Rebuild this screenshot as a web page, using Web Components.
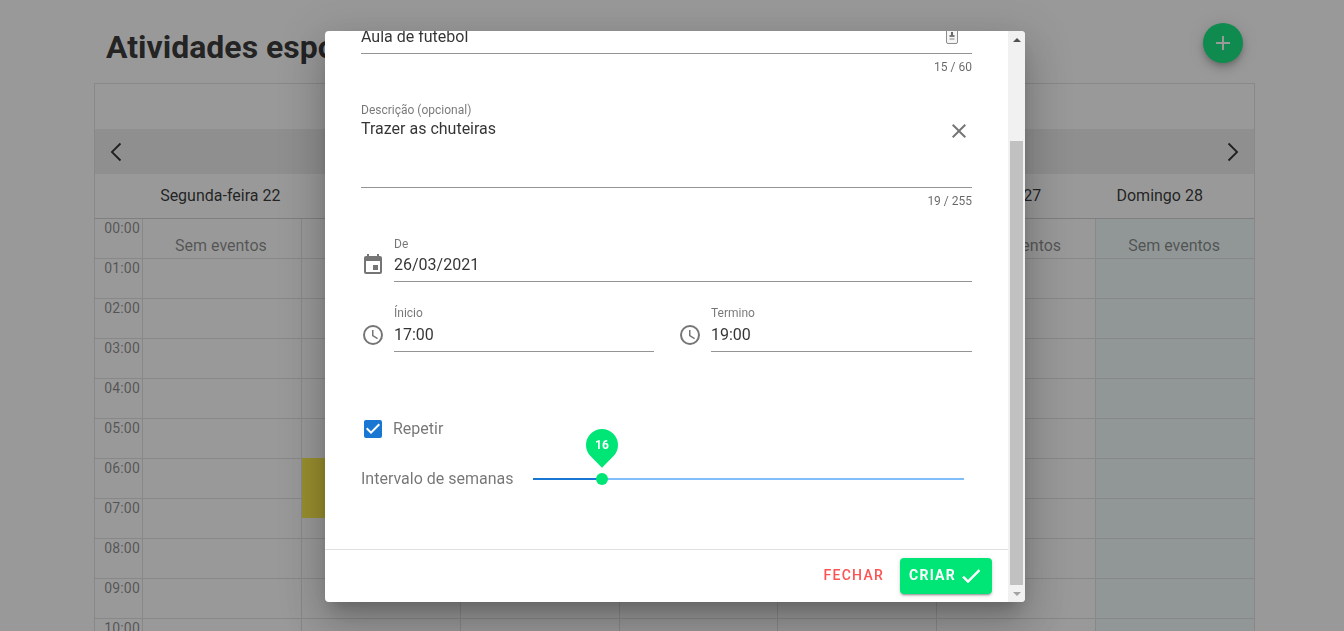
<!DOCTYPE html>
<html lang="pt">
<head>
<meta charset="utf-8">
<title>Atividades esportivas</title>
<style>
  html, body { margin: 0; height: 100%; overflow: hidden; background: #fff; font-family: Roboto, sans-serif; }
</style>
</head>
<body>
<activity-page></activity-page>
<event-dialog></event-dialog>

<script>
const ICONS = {
	clock: "M12 20a8 8 0 1 1 0-16 8 8 0 0 1 0 16m0-18A10 10 0 1 0 12 22 10 10 0 0 0 12 2m.5 5H11v6l5.2 3.2.8-1.3-4.5-2.7z",
	calendar: "M19 19H5V8h14m-3-7v2H8V1H6v2H5c-1.11 0-2 .89-2 2v14a2 2 0 0 0 2 2h14a2 2 0 0 0 2-2V5a2 2 0 0 0-2-2h-1V1m-1 11h-5v5h5z",
	close: "M19 6.41 17.59 5 12 10.59 6.41 5 5 6.41 10.59 12 5 17.59 6.41 19 12 13.41 17.59 19 19 17.59 13.41 12z",
	check: "M21 7 9 19l-5.5-5.5 1.41-1.41L9 16.17 19.59 5.59z",
	checkbox: "M10 17l-5-5 1.41-1.42L10 14.17l7.59-7.59L19 8m0-5H5c-1.11 0-2 .89-2 2v14a2 2 0 0 0 2 2h14a2 2 0 0 0 2-2V5a2 2 0 0 0-2-2z",
	left: "M15.41 3.41 14 2 4 12l10 10 1.41-1.41L6.83 12z",
	right: "M8.59 3.41 10 2l10 10-10 10-1.41-1.41L17.17 12z",
	plus: "M19 13h-6v6h-2v-6H5v-2h6V5h2v6h6z",
};

function icon(name, size, color, stroke) {
	const outline = stroke ? ` stroke="${color}" stroke-width="${stroke}"` : "";
	return `<svg width="${size}" height="${size}" viewBox="0 0 24 24" fill="${color}"${outline} style="display:block;flex:none"><path d="${ICONS[name]}"/></svg>`;
}

// little id-card glyph at the end of the title field
const BADGE = `<svg width="12" height="16" viewBox="0 0 12 16" style="display:block;margin:3px 14px 0 0">
	<rect x=".5" y=".5" width="11" height="15" rx="1.5" fill="#f5f5f5" stroke="#8c8c8c"/>
	<rect x="5" y="4" width="2" height="3" fill="#666"/>
	<rect x="3.5" y="7" width="5" height="2" fill="#777"/>
	<rect x="3.5" y="10" width="5" height="2" fill="#bdbdbd"/>
</svg>`;

class ActivityPage extends HTMLElement {
	constructor() {
		super();
		this.shadowDOM = this.attachShadow({ mode: "open" });
	}

	connectedCallback() {
		const days = ["Segunda-feira 22", "Terça-feira 23", "Quarta-feira 24", "Quinta-feira 25", "Sexta-feira 26", "Sábado 27", "Domingo 28"];
		const hours = [];
		for (let h = 0; h < 11; h++) hours.push(String(h).padStart(2, "0") + ":00");

		const columns = days.map((d, i) => `
			<div class="col ${i == 6 ? "sunday" : ""}">
				<div class="empty">Sem eventos</div>
				${i == 1 ? `<div class="event"></div>` : ""}
				${hours.map(() => `<div class="cell"></div>`).join("")}
			</div>`).join("");

		this.shadowDOM.innerHTML = `
		<style>
			:host { display: block; padding: 0 89px 0 94px; box-sizing: border-box; height: 631px; overflow: hidden; color: rgba(0,0,0,.87); }
			header { display: flex; justify-content: space-between; align-items: center; height: 83px; padding: 0 12px; box-sizing: border-box; }
			h1 { margin: 10px 0 0; font-size: 32px; font-weight: 700; line-height: 40px; }
			.fab { width: 40px; height: 40px; margin: 3px 0 0; border-radius: 50%; background: #00e676; display: flex; align-items: center; justify-content: center;
				box-shadow: 0 3px 5px -1px rgba(0,0,0,.2), 0 6px 10px 0 rgba(0,0,0,.14), 0 1px 18px 0 rgba(0,0,0,.12); }
			.calendar { border: 1px solid #e0e0e0; border-bottom: 0; }
			.top { height: 45px; }
			.nav { height: 45px; background: #ececec; display: flex; justify-content: space-between; align-items: center; padding: 0 12px; }
			.days { display: grid; grid-template-columns: repeat(7, 1fr); height: 44px; margin-left: 47px; padding: 0 16px 2px 0; box-sizing: border-box; align-items: center; text-align: center; font-size: 16px; }
			.grid { display: grid; grid-template-columns: 47px repeat(7, 1fr); border-top: 1px solid #d0d0d0; }
			.time { height: 40px; box-sizing: border-box; border-bottom: 1px solid #e0e0e0; font-size: 14px; letter-spacing: .2px; color: rgba(0,0,0,.5); text-align: right; padding: 1px 2px 0 0; line-height: 16px; }
			.col { position: relative; border-left: 1px solid #e0e0e0; }
			.cell { height: 40px; box-sizing: border-box; border-bottom: 1px solid #e0e0e0; }
			.sunday { background: rgba(0,190,160,.06); }
			.empty { position: absolute; top: 18px; left: 0; right: 2px; text-align: center; font-size: 16px; line-height: 18px; color: rgba(0,0,0,.5); }
			.event { position: absolute; top: 239px; left: 0; right: 0; height: 60px; background: #ffeb3b; }
		</style>
		<header>
			<h1>Atividades esportivas</h1>
			<div class="fab">${icon("plus", 24, "#fff")}</div>
		</header>
		<div class="calendar">
			<div class="top"></div>
			<div class="nav">${icon("left", 22, "rgba(0,0,0,.87)")}${icon("right", 22, "rgba(0,0,0,.87)")}</div>
			<div class="days">${days.map((d) => `<div>${d}</div>`).join("")}</div>
			<div class="grid">
				<div>${hours.map((h) => `<div class="time">${h}</div>`).join("")}</div>
				${columns}
			</div>
		</div>`;
	}
}

class TextField extends HTMLElement {
	constructor() {
		super();
		this.shadowDOM = this.attachShadow({ mode: "open" });
	}

	connectedCallback() {
		const label = this.getAttribute("label");
		const value = this.getAttribute("value");
		const ic = this.getAttribute("icon");
		const counter = this.getAttribute("counter");
		const height = this.getAttribute("height") || "28";
		const gap = Number(this.getAttribute("gap") || 0);
		this.shadowDOM.innerHTML = `
		<style>
			:host { display: block; flex: 1; min-width: 0; color: rgba(0,0,0,.8); }
			.wrap { display: flex; }
			.icon { width: 24px; margin-right: 9px; padding-top: ${14 + gap}px; flex: none; }
			.main { flex: 1; min-width: 0; }
			.label { font-size: 12px; line-height: 14px; height: 14px; color: rgba(0,0,0,.54); }
			.input { position: relative; height: ${height}px; margin-top: ${gap}px; border-bottom: 1px solid rgba(0,0,0,.42); font-size: 16px; line-height: 24px; }
			.end { position: absolute; right: 0; top: 0; }
			.counter { height: 14px; margin-top: 6px; font-size: 12px; line-height: 14px; text-align: right; color: rgba(0,0,0,.6); }
		</style>
		<div class="wrap">
			${ic ? `<div class="icon">${icon(ic, 24, "rgba(0,0,0,.54)")}</div>` : ""}
			<div class="main">
				${label ? `<div class="label">${label}</div>` : ""}
				<div class="input">${value}<div class="end"><slot></slot></div></div>
				${counter ? `<div class="counter">${counter}</div>` : ""}
			</div>
		</div>`;
	}
}

class WeekSlider extends HTMLElement {
	constructor() {
		super();
		this.shadowDOM = this.attachShadow({ mode: "open" });
	}

	connectedCallback() {
		const label = this.getAttribute("label");
		const value = this.getAttribute("value");
		this.shadowDOM.innerHTML = `
		<style>
			:host { display: flex; align-items: center; height: 24px; }
			.label { width: 172px; flex: none; margin-bottom: 2px; font-size: 16px; color: rgba(0,0,0,.54); }
			.track { position: relative; flex: 1; height: 2px; margin-right: 8px; background: #80bdfb; }
			.fill { position: absolute; left: 0; top: 0; bottom: 0; width: 69px; background: #1976d2; }
			.thumb { position: absolute; left: 63px; top: -5px; width: 12px; height: 12px; border-radius: 50%; background: #00e676; }
			.bubble { position: absolute; left: 53px; top: -49px; width: 32px; height: 32px; border-radius: 50% 50% 0; background: #00e676; transform: rotate(45deg); display: flex; align-items: center; justify-content: center; }
			.bubble span { transform: rotate(-45deg); color: #fff; font-size: 12px; font-weight: 700; }
		</style>
		<div class="label">${label}</div>
		<div class="track">
			<div class="fill"></div>
			<div class="bubble"><span>${value}</span></div>
			<div class="thumb"></div>
		</div>`;
	}
}

class EventDialog extends HTMLElement {
	constructor() {
		super();
		this.shadowDOM = this.attachShadow({ mode: "open" });
	}

	connectedCallback() {
		this.shadowDOM.innerHTML = `
		<style>
			:host { position: fixed; inset: 0; display: flex; justify-content: center; align-items: flex-start; padding: 31px 0 0 6px; box-sizing: border-box; background: rgba(33,33,33,.46); font-family: Roboto, sans-serif; }
			.dialog { width: 700px; height: 571px; background: #fff; border-radius: 4px; display: flex; overflow: hidden;
				box-shadow: 0 11px 15px -7px rgba(0,0,0,.2), 0 24px 38px 3px rgba(0,0,0,.14), 0 9px 46px 8px rgba(0,0,0,.12); }
			.content { flex: 1; min-width: 0; display: flex; flex-direction: column; }
			.form { flex: 1; min-height: 0; overflow: hidden; padding: 0 36px; }
			.clip { margin-top: -6px; }
			.gap-a { height: 29px; }
			.gap-b { height: 29px; }
			.gap-c { height: 24px; }
			.row { display: flex; gap: 24px; }
			.start { flex: 0 0 293px; }
			.repeat { display: flex; align-items: center; gap: 8px; margin-top: 65px; height: 24px; font-size: 16px; color: rgba(0,0,0,.54); }
			.repeat span { margin-bottom: 2px; }
			week-slider { margin-top: 26px; }
			.actions { height: 52px; border-top: 1px solid #e0e0e0; display: flex; justify-content: flex-end; align-items: center; gap: 16px; padding: 0 16px 0 0; flex: none; }
			.btn { font-size: 14px; font-weight: 500; letter-spacing: 1.25px; }
			.btn span { display: block; margin-bottom: 2px; }
			.close { color: #ff5252; }
			.create { display: flex; align-items: center; gap: 3px; height: 36px; padding: 0 9px; border-radius: 4px; background: #00e676; color: #fff; font-weight: 700;
				box-shadow: 0 3px 1px -2px rgba(0,0,0,.2), 0 2px 2px 0 rgba(0,0,0,.14), 0 1px 5px 0 rgba(0,0,0,.12); }
			.scrollbar { width: 17px; flex: none; background: #f1f1f1; display: flex; flex-direction: column; align-items: center; }
			.arrow { height: 17px; flex: none; display: flex; align-items: center; justify-content: center; }
			.up { width: 0; height: 0; border: 4px solid transparent; border-top: 0; border-bottom-color: #505050; }
			.down { width: 0; height: 0; border: 4px solid transparent; border-bottom: 0; border-top-color: #a3a3a3; }
			.rail { flex: 1; width: 100%; padding: 93px 2px 0 2px; box-sizing: border-box; display: flex; }
			.thumb { flex: 1; background: #c1c1c1; }
			.x { padding: 2px 1px 0 0; }
		</style>
		<div class="dialog">
			<div class="content">
				<div class="form">
					<div class="clip">
						<text-field value="Aula de futebol" counter="15 / 60" height="28">${BADGE}</text-field>
						<div class="gap-a"></div>
						<text-field label="Descrição (opcional)" value="Trazer as chuteiras" counter="19 / 255" height="70"><div class="x">${icon("close", 24, "rgba(0,0,0,.54)")}</div></text-field>
						<div class="gap-b"></div>
						<text-field label="De" value="26/03/2021" icon="calendar" gap="2"></text-field>
						<div class="gap-c"></div>
						<div class="row">
							<text-field class="start" label="Ínicio" value="17:00" icon="clock" gap="3"></text-field>
							<text-field label="Termino" value="19:00" icon="clock" gap="3"></text-field>
						</div>
						<div class="repeat">${icon("checkbox", 24, "#1976d2")}<span>Repetir</span></div>
						<week-slider label="Intervalo de semanas" value="16"></week-slider>
					</div>
				</div>
				<div class="actions">
					<div class="btn close"><span>FECHAR</span></div>
					<div class="btn create"><span>CRIAR</span>${icon("check", 24, "#fff", .6)}</div>
				</div>
			</div>
			<div class="scrollbar">
				<div class="arrow"><div class="up"></div></div>
				<div class="rail"><div class="thumb"></div></div>
				<div class="arrow"><div class="down"></div></div>
			</div>
		</div>`;
	}
}

customElements.define("activity-page", ActivityPage);
customElements.define("text-field", TextField);
customElements.define("week-slider", WeekSlider);
customElements.define("event-dialog", EventDialog);
</script>
</body>
</html>
